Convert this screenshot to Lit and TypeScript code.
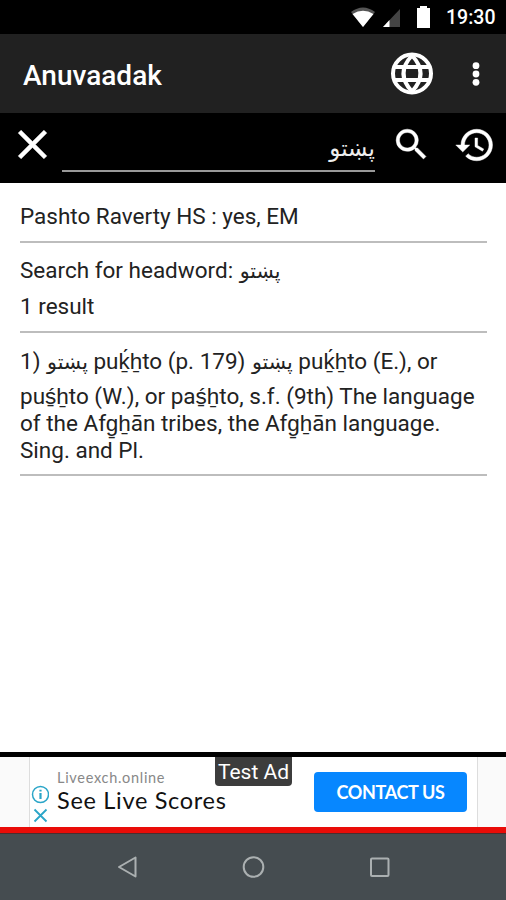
import { LitElement, html, css } from "lit";
import { customElement } from "lit/decorators.js";

@customElement("app-root")
export class AppRoot extends LitElement {
  static styles = css`
    :host {
      display: flex;
      flex-direction: column;
      width: 506px;
      height: 900px;
      overflow: hidden;
      background: #fff;
      color: #222;
      font-family: Roboto, "Liberation Sans", sans-serif;
    }
    * { box-sizing: border-box; }
    svg { display: block; flex: none; }
    .status {
      height: 34px;
      background: #000;
      color: #fff;
      display: flex;
      align-items: center;
      justify-content: flex-end;
      padding-right: 11px;
    }
    .time {
      font-size: 19.5px;
      font-weight: 500;
      line-height: 34px;
      margin: 2px 0 0 15px;
      width: 49px;
      white-space: nowrap;
    }
    .toolbar {
      height: 79px;
      background: #212121;
      color: #fff;
      display: flex;
      align-items: center;
      padding: 0 10px 0 23px;
    }
    .title { flex: 1; font-size: 28px; font-weight: 500; padding-top: 3px; }
    .globe { margin-right: 22px; }
    .search {
      height: 70px;
      background: #000;
      color: #eee;
      display: flex;
      align-items: flex-start;
      padding: 7px 9px 0 8px;
    }
    .field {
      width: 313px;
      height: 52px;
      margin-left: 5px;
      border-bottom: 2px solid #999;
      text-align: right;
      font-size: 22px;
      line-height: 57px;
    }
    .field .ps { font-size: 23px; margin: 0; }
    .find { margin: 4px 0 0 16px; }
    .history { margin: 4px 0 0 22px; }
    .content { flex: 1; padding: 20px 19px 0 20px; }
    .line {
      font-size: 22.5px;
      height: 27px;
      line-height: 27px;
      white-space: nowrap;
    }
    .rule { height: 2px; background: #bdbdbd; }
    .ps { font-family: "DejaVu Sans", sans-serif; font-size: 20.5px; line-height: 1; margin-left: 1px; }
    .after { margin-top: 11px; }
    .last { margin-top: 10px; }
    .meta { margin-top: 14px; }
    .count { margin-top: 9px; }
    .entry { margin-top: 15px; }
    .wrap { margin-top: 8px; }
    .ad {
      height: 75px;
      border-top: 5px solid #000;
      background: #fafafa;
      display: flex;
      justify-content: center;
      position: relative;
    }
    .card {
      width: 449px;
      margin-left: 1px;
      background: #fff;
      border: solid #ddd;
      border-width: 0 1px;
      display: flex;
    }
    .choices { width: 20px; padding: 28px 0 0 1px; }
    .copy { width: 257px; padding: 11px 0 0 7px; font-family: Lato, sans-serif; white-space: nowrap; }
    .advertiser { font-size: 14.5px; line-height: 19px; color: #888; letter-spacing: 0.7px; }
    .headline { font-size: 23.5px; line-height: 27px; color: #111; letter-spacing: 0.7px; }
    .cta {
      width: 153px;
      height: 40px;
      margin: 15px 0 0 7px;
      border-radius: 4px;
      background: #0787ff;
      color: #fff;
      font: 700 18px/40px Lato, sans-serif;
      letter-spacing: -0.35px;
      text-align: center;
      white-space: nowrap;
    }
    .badge {
      position: absolute;
      left: 215px;
      top: 0;
      width: 77px;
      height: 29px;
      border-radius: 0 0 4px 4px;
      background: #3c3c3c;
      color: #fff;
      font-size: 21px;
      line-height: 31px;
      text-align: center;
      white-space: nowrap;
    }
    .alert { height: 7px; background: #e90c08; border-bottom: 1px solid #4b2c2e; }
    .nav {
      height: 66px;
      background: #454c50;
      display: flex;
      align-items: center;
      padding-left: 113px;
      gap: 100px;
    }
  `;

  render() {
    const word = html`<bdi class="ps" lang="ps">پښتو</bdi>`;
    return html`
      <div class="status">
        <svg width="80" height="34" viewBox="0 0 80 34">
          <path d="M0 12Q12 3 24 12L12 27Z" fill="#555" />
          <path d="M1.500 14Q12 7.500 22.500 14L12 27Z" fill="#fff" />
          <path d="M32 27L49 9V27Z" fill="#444" />
          <path d="M32 27L38.500 20V27Z" fill="#fff" />
          <path d="M66 8H69V6H76V8H79V28H66Z" fill="#fff" />
        </svg>
        <span class="time">19:30</span>
      </div>
      <div class="toolbar">
        <span class="title">Anuvaadak</span>
        <svg class="globe" width="44" height="44" viewBox="-22 -21.500 44 44" fill="none" stroke="#fff" stroke-width="4">
          <circle r="19" />
          <path d="M0 -18Q-17 0 0 18Q17 0 0 -18Z" stroke-linejoin="round" />
          <path d="M-18 -6.500H18M-18 6.500H18" />
        </svg>
        <svg width="40" height="40" viewBox="-20 -20 40 40" fill="#fff">
          <circle cy="-8.300" r="3.400" /><circle r="3.400" /><circle cy="8.300" r="3.400" />
        </svg>
      </div>
      <div class="search">
        <svg width="49" height="49" viewBox="0 0 24 24" fill="#fff" stroke="#fff" stroke-width=".25">
          <path d="M19 6.410L17.590 5 12 10.590 6.410 5 5 6.410 10.590 12 5 17.590 6.410 19 12 13.410 17.590 19 19 17.590 13.410 12z" />
        </svg>
        <div class="field">${word}</div>
        <svg class="find" width="41" height="41" viewBox="0 0 24 24" fill="#fff" stroke="#fff" stroke-width=".25">
          <path d="M15.500 14h-.79l-.28-.27A6.471 6.471 0 0 0 16 9.500 6.500 6.500 0 1 0 9.500 16c1.610 0 3.090-.59 4.230-1.570l.27.28v.79l5 4.990L20.490 19l-4.990-5zm-6 0C7.010 14 5 11.990 5 9.500S7.010 5 9.500 5 14 7.010 14 9.500 11.990 14 9.500 14z" />
        </svg>
        <svg class="history" width="42" height="42" viewBox="0 0 24 24" fill="#fff" stroke="#fff" stroke-width=".25">
          <path d="M13 3c-4.970 0-9 4.030-9 9H1l3.890 3.890.07.14L9 12H6c0-3.870 3.130-7 7-7s7 3.130 7 7-3.130 7-7 7c-1.930 0-3.680-.79-4.940-2.060l-1.420 1.420C8.270 19.990 10.510 21 13 21c4.970 0 9-4.030 9-9s-4.030-9-9-9zm-1 5v5l4.280 2.540.72-1.210-3.500-2.080V8H12z" />
        </svg>
      </div>
      <div class="content">
        <div class="line">Pashto Raverty HS : yes, EM</div>
        <div class="rule after"></div>
        <div class="line meta">Search for headword: ${word}</div>
        <div class="line count">1 result</div>
        <div class="rule after"></div>
        <div class="line entry">1) ${word} puḵ́ẖto (p. 179) ${word} puḵ́ẖto (E.), or</div>
        <div class="line wrap">puś̱ẖto (W.), or paś̱ẖto, s.f. (9th) The language</div>
        <div class="line">of the Afg̱ẖān tribes, the Afg̱ẖān language.</div>
        <div class="line">Sing. and Pl.</div>
        <div class="rule last"></div>
      </div>
      <div class="ad">
        <div class="card">
          <div class="choices">
            <svg width="18" height="40" viewBox="0 0 18 40" fill="none" stroke="#2aa5c8" stroke-width="1.500">
              <circle cx="9.500" cy="9.500" r="8" />
              <path d="M9.500 8V14M9.500 4.700V6.500" stroke-width="2.200" />
              <path d="M3.500 24.500L15.500 36.500M15.500 24.500L3.500 36.500" stroke-width="1.800" />
            </svg>
          </div>
          <div class="copy">
            <div class="advertiser">Liveexch.online</div>
            <div class="headline">See Live Scores</div>
          </div>
          <div class="cta">CONTACT US</div>
        </div>
        <div class="badge">Test Ad</div>
      </div>
      <div class="alert"></div>
      <div class="nav">
        <svg width="26" height="26" viewBox="0 0 26 26" fill="none" stroke="#abb0b1" stroke-width="2">
          <path d="M6 13L22.500 3.500V22.500Z" stroke-linejoin="round" />
        </svg>
        <svg width="26" height="26" viewBox="0 0 26 26" fill="none" stroke="#abb0b1" stroke-width="2">
          <circle cx="14.500" cy="13" r="9.800" />
        </svg>
        <svg width="26" height="26" viewBox="0 0 26 26" fill="none" stroke="#abb0b1" stroke-width="2">
          <rect x="6" y="4.500" width="17.500" height="17.500" rx="1" />
        </svg>
      </div>
    `;
  }
}
